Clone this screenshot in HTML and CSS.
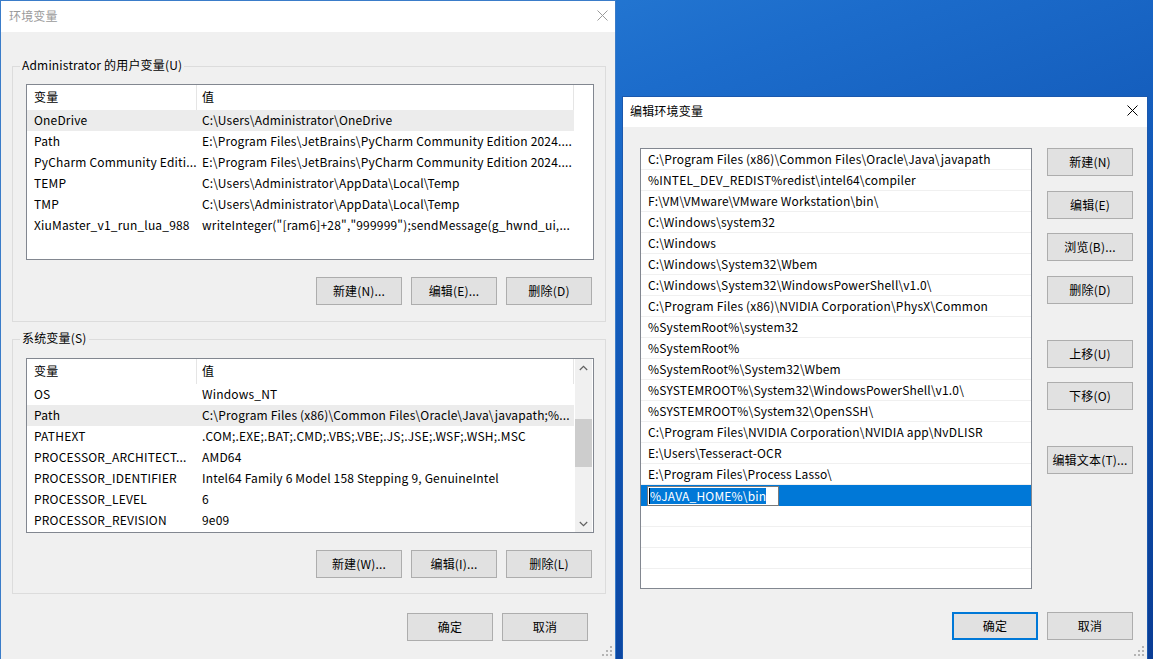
FILE: index.html
```html
<!DOCTYPE html>
<html lang="zh-CN">
<head>
<meta charset="utf-8">
<title>环境变量</title>
<link rel="stylesheet" href="styles.css">
</head>
<body>
<div class="desktop">

  <section class="win win-env">
    <header class="titlebar inactive">
      <span class="title">环境变量</span>
      <svg class="close" width="11" height="11" viewBox="0 0 11 11"><path d="M0.5 0.5 L10.5 10.5 M10.5 0.5 L0.5 10.5" stroke="currentColor" stroke-width="1" fill="none"/></svg>
    </header>
    <div class="env-body">
      <div class="group">
        <span class="group-title">Administrator 的用户变量(U)</span>
        <div class="lv">
          <div class="lv-main">
            <div class="lv-head"><div class="c1">变量</div><div class="c2">值</div></div>
            <div class="lv-row sel"><div class="c1">OneDrive</div><div class="c2">C:\Users\Administrator\OneDrive</div></div>
            <div class="lv-row"><div class="c1">Path</div><div class="c2">E:\Program Files\JetBrains\PyCharm Community Edition 2024....</div></div>
            <div class="lv-row"><div class="c1">PyCharm Community Editi...</div><div class="c2">E:\Program Files\JetBrains\PyCharm Community Edition 2024....</div></div>
            <div class="lv-row"><div class="c1">TEMP</div><div class="c2">C:\Users\Administrator\AppData\Local\Temp</div></div>
            <div class="lv-row"><div class="c1">TMP</div><div class="c2">C:\Users\Administrator\AppData\Local\Temp</div></div>
            <div class="lv-row"><div class="c1">XiuMaster_v1_run_lua_988</div><div class="c2">writeInteger("[ram6]+28","999999");sendMessage(g_hwnd_ui,...</div></div>
          </div>
          <div class="lv-gutter"></div>
        </div>
        <div class="btn-row">
          <button class="btn">新建(N)...</button>
          <button class="btn">编辑(E)...</button>
          <button class="btn">删除(D)</button>
        </div>
      </div>

      <div class="group group-sys">
        <span class="group-title">系统变量(S)</span>
        <div class="lv">
          <div class="lv-main">
            <div class="lv-head"><div class="c1">变量</div><div class="c2">值</div></div>
            <div class="lv-row"><div class="c1">OS</div><div class="c2">Windows_NT</div></div>
            <div class="lv-row sel"><div class="c1">Path</div><div class="c2">C:\Program Files (x86)\Common Files\Oracle\Java\javapath;%...</div></div>
            <div class="lv-row"><div class="c1">PATHEXT</div><div class="c2">.COM;.EXE;.BAT;.CMD;.VBS;.VBE;.JS;.JSE;.WSF;.WSH;.MSC</div></div>
            <div class="lv-row"><div class="c1">PROCESSOR_ARCHITECT...</div><div class="c2">AMD64</div></div>
            <div class="lv-row"><div class="c1">PROCESSOR_IDENTIFIER</div><div class="c2">Intel64 Family 6 Model 158 Stepping 9, GenuineIntel</div></div>
            <div class="lv-row"><div class="c1">PROCESSOR_LEVEL</div><div class="c2">6</div></div>
            <div class="lv-row"><div class="c1">PROCESSOR_REVISION</div><div class="c2">9e09</div></div>
          </div>
          <div class="lv-gutter">
            <div class="scrollbar">
              <div class="sb-arrow"><svg width="9" height="6" viewBox="0 0 9 6"><path d="M0.8 5 L4.5 1.3 L8.2 5" stroke="#606060" stroke-width="1.2" fill="none"/></svg></div>
              <div class="sb-track"><div class="sb-thumb"></div></div>
              <div class="sb-arrow"><svg width="9" height="6" viewBox="0 0 9 6"><path d="M0.8 1 L4.5 4.7 L8.2 1" stroke="#606060" stroke-width="1.2" fill="none"/></svg></div>
            </div>
          </div>
        </div>
        <div class="btn-row">
          <button class="btn">新建(W)...</button>
          <button class="btn">编辑(I)...</button>
          <button class="btn">删除(L)</button>
        </div>
      </div>

      <div class="footer footer-env">
        <button class="btn">确定</button>
        <button class="btn">取消</button>
      </div>
    </div>
    <svg class="grip" width="10" height="10" viewBox="0 0 10 10"><g fill="#b4b4b4"><rect x="8" y="0" width="2" height="2"/><rect x="4" y="4" width="2" height="2"/><rect x="8" y="4" width="2" height="2"/><rect x="0" y="8" width="2" height="2"/><rect x="4" y="8" width="2" height="2"/><rect x="8" y="8" width="2" height="2"/></g></svg>
  </section>

  <section class="win win-edit">
    <header class="titlebar">
      <span class="title">编辑环境变量</span>
      <svg class="close" width="11" height="11" viewBox="0 0 11 11"><path d="M0.5 0.5 L10.5 10.5 M10.5 0.5 L0.5 10.5" stroke="currentColor" stroke-width="1" fill="none"/></svg>
    </header>
    <div class="edit-body">
      <div class="edit-main">
        <div class="plist">
          <div class="prow">C:\Program Files (x86)\Common Files\Oracle\Java\javapath</div>
          <div class="prow">%INTEL_DEV_REDIST%redist\intel64\compiler</div>
          <div class="prow">F:\VM\VMware\VMware Workstation\bin\</div>
          <div class="prow">C:\Windows\system32</div>
          <div class="prow">C:\Windows</div>
          <div class="prow">C:\Windows\System32\Wbem</div>
          <div class="prow">C:\Windows\System32\WindowsPowerShell\v1.0\</div>
          <div class="prow">C:\Program Files (x86)\NVIDIA Corporation\PhysX\Common</div>
          <div class="prow">%SystemRoot%\system32</div>
          <div class="prow">%SystemRoot%</div>
          <div class="prow">%SystemRoot%\System32\Wbem</div>
          <div class="prow">%SYSTEMROOT%\System32\WindowsPowerShell\v1.0\</div>
          <div class="prow">%SYSTEMROOT%\System32\OpenSSH\</div>
          <div class="prow">C:\Program Files\NVIDIA Corporation\NVIDIA app\NvDLISR</div>
          <div class="prow">E:\Users\Tesseract-OCR</div>
          <div class="prow">E:\Program Files\Process Lasso\</div>
          <div class="prow sel"><span class="editbox"><span class="caret"></span><span class="hl">%JAVA_HOME%\bin</span></span></div>
          <div class="prow"></div>
          <div class="prow"></div>
          <div class="prow"></div>
          <div class="prow"></div>
        </div>
        <div class="side">
          <button class="btn">新建(N)</button>
          <button class="btn s-edit">编辑(E)</button>
          <button class="btn s-browse">浏览(B)...</button>
          <button class="btn s-del">删除(D)</button>
          <button class="btn s-up">上移(U)</button>
          <button class="btn s-down">下移(O)</button>
          <button class="btn s-text">编辑文本(T)...</button>
        </div>
      </div>
      <div class="footer footer-edit">
        <button class="btn default">确定</button>
        <button class="btn">取消</button>
      </div>
    </div>
    <svg class="grip" width="10" height="10" viewBox="0 0 10 10"><g fill="#b4b4b4"><rect x="8" y="0" width="2" height="2"/><rect x="4" y="4" width="2" height="2"/><rect x="8" y="4" width="2" height="2"/><rect x="0" y="8" width="2" height="2"/><rect x="4" y="8" width="2" height="2"/><rect x="8" y="8" width="2" height="2"/></g></svg>
  </section>

</div>
</body>
</html>
```

FILE: styles.css
```css
* { box-sizing: border-box; }

html, body {
  margin: 0;
  padding: 0;
}

body {
  width: 1153px;
  height: 659px;
  overflow: hidden;
  font-family: "Noto Sans CJK SC", "Microsoft YaHei UI", sans-serif;
  font-size: 12px;
  letter-spacing: 0.18px;
  color: #000;
}

.desktop {
  position: relative;
  width: 1153px;
  height: 659px;
  overflow: hidden;
  background: linear-gradient(160deg, #3088dc 0%, #1c6ccb 30%, #0e51b0 65%, #0a3d95 100%);
}

/* windows on the desktop */
.win {
  position: absolute;
  background: #f0f0f0;
  display: flex;
  flex-direction: column;
}

.win-env {
  left: 0;
  top: 0;
  width: 616px;
  height: 660px;
  border: 1px solid #3a7cc9;
}

.win-edit {
  left: 622px;
  top: 96px;
  width: 526px;
  height: 564px;
  border: 1px solid #1b58ad;
}

.titlebar {
  flex: none;
  height: 31px;
  background: #fff;
  display: flex;
  align-items: center;
  justify-content: space-between;
  padding: 0 7px 2px 8px;
}

.titlebar .title { line-height: 16px; }
.titlebar .close { color: #000; }
.titlebar.inactive .title { color: #9a9a9a; }
.titlebar.inactive .close { color: #9a9a9a; }

.win-edit .titlebar {
  height: 30px;
  padding: 0 9px 3px 7px;
}

.grip {
  position: absolute;
  right: 3px;
  bottom: 3px;
}

/* environment variables window */
.env-body {
  padding: 34px 9px 0 11px;
}

.group {
  position: relative;
  border: 1px solid #dcdcdc;
  padding: 17px 11px 16px 13px;
}

.group + .group { margin-top: 17px; }
.group-sys { padding-top: 18px; padding-bottom: 15px; }

.group-title {
  position: absolute;
  top: -10px;
  left: 7px;
  padding: 0 2px;
  background: #f0f0f0;
  line-height: 16px;
  white-space: nowrap;
}

.lv {
  height: 176px;
  border: 1px solid #828790;
  background: #fff;
  display: flex;
  overflow: hidden;
}

.group-sys .lv { height: 175px; }

.lv-main { width: 547px; flex: none; }
.lv-gutter { flex: 1; position: relative; }

.lv-head {
  display: flex;
  height: 25px;
  align-items: center;
}

.lv-head .c1 { border-right: 1px solid #e5e5e5; height: 25px; line-height: 23px; }
.lv-head .c2 { border-right: 1px solid #e5e5e5; height: 25px; line-height: 23px; }

.lv-row {
  display: flex;
  height: 21px;
  line-height: 19px;
}

.lv-row.sel { background: #ececec; }

.c1 {
  flex: none;
  width: 170px;
  padding-left: 7px;
  white-space: nowrap;
  overflow: hidden;
}

.c2 {
  flex: 1;
  min-width: 0;
  padding-left: 5px;
  white-space: nowrap;
  overflow: hidden;
}

.scrollbar {
  position: absolute;
  top: 0;
  bottom: 0;
  right: 1px;
  width: 17px;
  background: #f0f0f0;
  display: flex;
  flex-direction: column;
}

.sb-arrow {
  flex: none;
  height: 17px;
  display: flex;
  align-items: center;
  justify-content: center;
}

.sb-track { flex: 1; padding-top: 43px; }

.sb-thumb {
  height: 48px;
  background: #cdcdcd;
}

.btn-row {
  display: flex;
  justify-content: flex-end;
  gap: 9px;
  margin-top: 17px;
  padding-right: 2px;
}

.btn {
  width: 86px;
  height: 28px;
  padding: 0 0 2px 0;
  margin: 0;
  border: 1px solid #adadad;
  background: #e1e1e1;
  font: inherit;
  letter-spacing: inherit;
  color: #000;
  display: flex;
  align-items: center;
  justify-content: center;
}

.footer {
  display: flex;
  justify-content: flex-end;
  gap: 9px;
}

.footer-env {
  margin-top: 19px;
  padding-right: 18px;
}

/* edit window */
.edit-body {
  padding: 21px 14px 0 17px;
}

.edit-main {
  display: flex;
  gap: 15px;
}

.plist {
  width: 392px;
  height: 441px;
  border: 1px solid #828790;
  background: #fff;
  overflow: hidden;
}

.prow {
  height: 21px;
  border-bottom: 1px solid #f0f0f0;
  padding-left: 7px;
  line-height: 19px;
  white-space: nowrap;
}

.prow.sel {
  background: #0078d7;
  border-bottom-color: #0078d7;
  padding-left: 6px;
  padding-top: 1px;
}

.editbox {
  display: flex;
  align-items: center;
  width: 132px;
  height: 20px;
  border: 1px solid #7a7a7a;
  background: #fff;
  padding-left: 1px;
}

.caret {
  width: 1px;
  height: 16px;
  background: #000;
  flex: none;
}

.hl {
  background: #0078d7;
  color: #fff;
  line-height: 15px;
  height: 16px;
}

.side {
  display: flex;
  flex-direction: column;
  width: 86px;
  flex: none;
}

.s-edit { margin-top: 15px; }
.s-browse { margin-top: 14px; }
.s-del { margin-top: 15px; }
.s-up { margin-top: 36px; }
.s-down { margin-top: 14px; }
.s-text { margin-top: 36px; }

.footer-edit {
  margin-top: 23px;
}

.btn.default {
  border: 2px solid #0078d7;
}
```
